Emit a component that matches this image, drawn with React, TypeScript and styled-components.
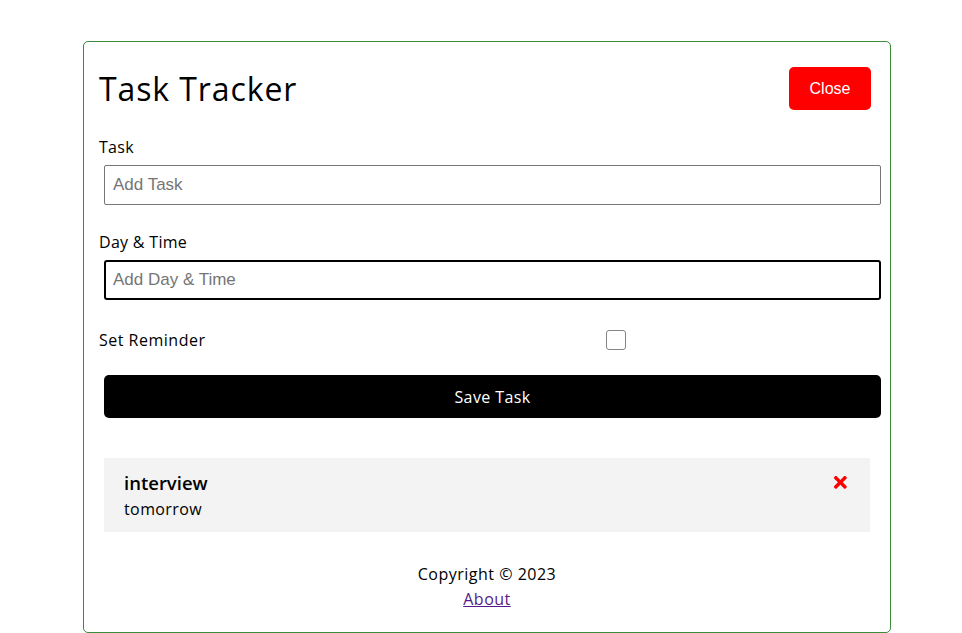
import React from "react";
import styled, { createGlobalStyle } from "styled-components";
import { FaTimes } from "react-icons/fa";

const GlobalStyle = createGlobalStyle`
  * { box-sizing: border-box; }
  body {
    margin: 0;
    background: #fff;
    font-family: "Open Sans", "Noto Sans", sans-serif;
    color: #000;
  }
`;

const Container = styled.div`
  width: 808px;
  margin: 41px 0 0 83px;
  border: 1px solid #3a8a3a;
  border-radius: 5px;
  padding: 20px 15px 20px;
`;

const Header = styled.header`
  display: flex;
  justify-content: space-between;
  align-items: center;
  height: 53px;
  margin-bottom: 20px;
`;

const Title = styled.h1`
  margin: 0;
  font-size: 32px;
  font-weight: 500;
  letter-spacing: 0.9px;
`;

const CloseButton = styled.button`
  background: #ff0000;
  color: #fff;
  border: none;
  border-radius: 5px;
  width: 82px;
  height: 43px;
  margin: 5px 4px 5px 5px;
  font-family: "Liberation Sans", Arial, sans-serif;
  font-size: 16px;
  cursor: pointer;
`;

const Label = styled.label`
  display: block;
  font-size: 16px;
  line-height: 24px;
  letter-spacing: 0.3px;
`;

const Field = styled.div<{ $top: number }>`
  margin-top: ${(p) => p.$top}px;
`;

const Input = styled.input<{ $focused?: boolean }>`
  display: block;
  width: calc(100% + 1px);
  height: 40px;
  margin: 6px 0 0 5px;
  padding: 3px ${(p) => (p.$focused ? 7 : 8)}px;
  font-family: "Liberation Sans", Arial, sans-serif;
  font-size: 17px;
  color: #000;
  border: ${(p) => (p.$focused ? "2px solid #000" : "1px solid #767676")};
  border-radius: ${(p) => (p.$focused ? 3 : 2)}px;
  outline: none;
  &::placeholder { color: #757575; }
`;

const CheckRow = styled.div`
  display: flex;
  align-items: center;
  height: 30px;
  margin-top: 25px;
`;

const CheckLabel = styled.label`
  flex: 1;
  font-size: 16px;
  letter-spacing: 0.5px;
`;

const CheckCell = styled.div`
  flex: 2;
  display: flex;
  justify-content: center;
`;

const CheckBox = styled.span`
  display: block;
  width: 20px;
  height: 20px;
  border: 1.5px solid #858585;
  border-radius: 3px;
`;

const SaveButton = styled.button`
  display: block;
  width: calc(100% + 1px);
  height: 43px;
  margin: 20px 0 0 5px;
  background: #000;
  color: #fff;
  border: none;
  border-radius: 5px;
  font-family: inherit;
  font-size: 16px;
  font-weight: 500;
  letter-spacing: 0.4px;
  cursor: pointer;
`;

const Task = styled.div`
  margin: 40px 5px 0;
  padding: 10px 20px;
  background: #f3f3f3;
`;

const TaskTitle = styled.h3`
  display: flex;
  justify-content: space-between;
  align-items: center;
  margin: 0;
  height: 28px;
  font-size: 18.5px;
  font-weight: 600;
  svg {
    color: #ff0000;
    font-size: 18.72px;
  }
`;

const TaskDay = styled.p`
  margin: 0;
  font-size: 16px;
  line-height: 26px;
  letter-spacing: 0.4px;
`;

const Footer = styled.footer`
  margin-top: 30px;
  text-align: center;
  font-size: 16px;
  line-height: 25px;
  letter-spacing: 0.5px;
`;

const FooterLine = styled.p`
  margin: 0;
`;

const AboutLink = styled.a`
  color: #551a8b;
  text-decoration: underline;
`;

export default function App() {
  return (
    <>
      <GlobalStyle />
      <Container>
        <Header>
          <Title>Task Tracker</Title>
          <CloseButton>Close</CloseButton>
        </Header>
        <form>
          <Field $top={0}>
            <Label>Task</Label>
            <Input type="text" placeholder="Add Task" />
          </Field>
          <Field $top={25}>
            <Label>Day &amp; Time</Label>
            <Input type="text" placeholder="Add Day & Time" $focused />
          </Field>
          <CheckRow>
            <CheckLabel>Set Reminder</CheckLabel>
            <CheckCell>
              <CheckBox />
            </CheckCell>
          </CheckRow>
          <SaveButton type="button">Save Task</SaveButton>
        </form>
        <Task>
          <TaskTitle>
            interview <FaTimes />
          </TaskTitle>
          <TaskDay>tomorrow</TaskDay>
        </Task>
        <Footer>
          <FooterLine>Copyright © 2023</FooterLine>
          <AboutLink href="#">About</AboutLink>
        </Footer>
      </Container>
    </>
  );
}
